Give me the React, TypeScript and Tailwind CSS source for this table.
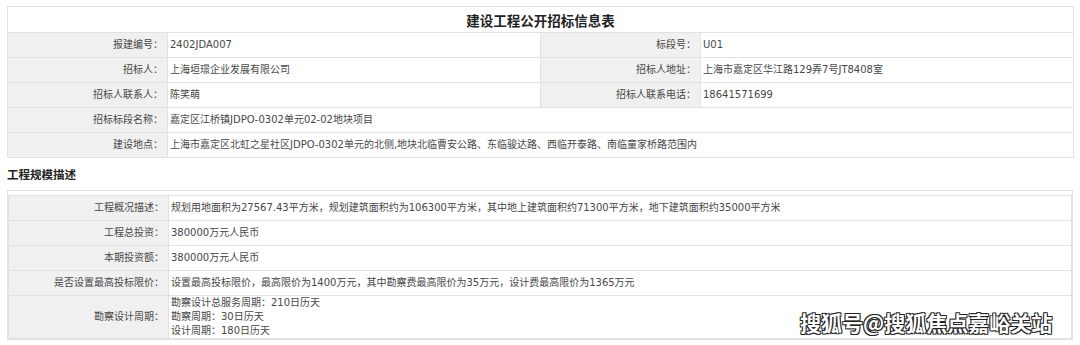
const labelCls = 'bg-[#f0f0f0] text-right pr-[4px] w-[160px] border border-[#e2e2e2] align-middle';
const valueCls = 'bg-white text-left pl-[2px] border border-[#e2e2e2] align-middle';

function Row({ label, value, label2, value2 }: { label: string; value: React.ReactNode; label2?: string; value2?: string }) {
  return (
    <tr className="h-[25px]">
      <td className={labelCls}>{label}：</td>
      {label2 ? (
        <>
          <td className={valueCls + ' w-[373px]'}>{value}</td>
          <td className={labelCls}>{label2}：</td>
          <td className={valueCls}>{value2}</td>
        </>
      ) : (
        <td className={valueCls} colSpan={3}>{value}</td>
      )}
    </tr>
  );
}

export default function App() {
  return (
    <div className="relative w-[1080px] h-[345px] bg-white overflow-hidden text-[10px] leading-[14px] text-[#474747] font-['DejaVu_Sans','Noto_Sans_CJK_SC',sans-serif]">
      <div className="pl-[7px] pt-[6px] w-[1073px]">
        <table className="w-[1066px] border-collapse table-fixed">
          <colgroup>
            <col className="w-[160px]" />
            <col className="w-[373px]" />
            <col className="w-[160px]" />
            <col className="w-[373px]" />
          </colgroup>
          <tbody>
            <tr className="h-[26px]">
              <td colSpan={4} className="border border-[#e2e2e2] text-center font-bold text-[13.5px] text-[#222] font-['Noto_Sans_CJK_SC',sans-serif]">
                建设工程公开招标信息表
              </td>
            </tr>
            <Row label="报建编号" value="2402JDA007" label2="标段号" value2="U01" />
            <Row label="招标人" value="上海垣璟企业发展有限公司" label2="招标人地址" value2="上海市嘉定区华江路129弄7号JT8408室" />
            <Row label="招标人联系人" value="陈笑萌" label2="招标人联系电话" value2="18641571699" />
            <Row label="招标标段名称" value="嘉定区江桥镇JDPO-0302单元02-02地块项目" />
            <Row label="建设地点" value="上海市嘉定区北虹之星社区JDPO-0302单元的北侧,地块北临曹安公路、东临骏达路、西临开泰路、南临童家桥路范围内" />
          </tbody>
        </table>

        <h2 className="h-[32px] flex items-center font-bold text-[11.5px] text-[#222] font-['Noto_Sans_CJK_SC',sans-serif]">
          工程规模描述
        </h2>

        <div className="w-[1066px] border border-[#e2e2e2] pt-[4px]">
          <table className="w-full border-collapse table-fixed">
            <colgroup>
              <col className="w-[160px]" />
              <col />
              <col />
              <col />
            </colgroup>
            <tbody>
              <Row label="工程概况描述" value="规划用地面积为27567.43平方米，规划建筑面积约为106300平方米，其中地上建筑面积约71300平方米，地下建筑面积约35000平方米" />
              <Row label="工程总投资" value="380000万元人民币" />
              <Row label="本期投资额" value="380000万元人民币" />
              <Row label="是否设置最高投标限价" value="设置最高投标限价，最高限价为1400万元，其中勘察费最高限价为35万元，设计费最高限价为1365万元" />
              <tr className="h-[43px]">
                <td className={labelCls}>勘察设计周期：</td>
                <td className={valueCls} colSpan={3}>
                  <div>勘察设计总服务周期：210日历天</div>
                  <div>勘察周期：30日历天</div>
                  <div>设计周期：180日历天</div>
                </td>
              </tr>
            </tbody>
          </table>
        </div>
      </div>

      <div className="absolute left-[800px] top-[310px] text-[21px] leading-[25px] font-bold text-white font-['Noto_Sans_CJK_SC',sans-serif] [text-shadow:1px_1px_0_#222,-1px_-1px_0_#222,1px_-1px_0_#222,-1px_1px_0_#222]">
        搜狐号@搜狐焦点嘉峪关站
      </div>
    </div>
  );
}
